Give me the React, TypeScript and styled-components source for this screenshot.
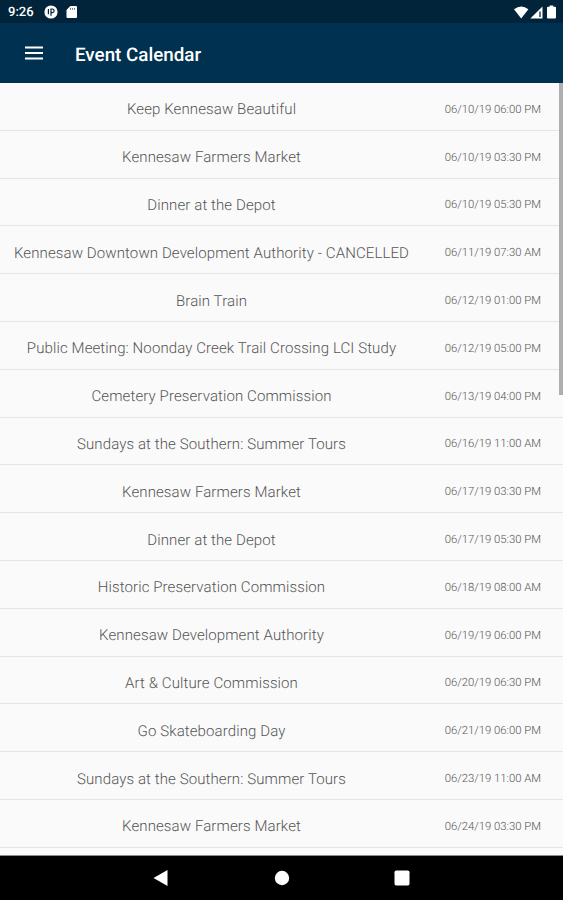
import React from "react";
import styled, { createGlobalStyle } from "styled-components";

const GlobalStyle = createGlobalStyle`
  * { box-sizing: border-box; }
  body { margin: 0; background: #fafafa; overflow: hidden; }
`;

const Screen = styled.div`
  width: 563px;
  height: 900px;
  display: flex;
  flex-direction: column;
  overflow: hidden;
  background: #fafafa;
  font-family: Roboto, "Liberation Sans", sans-serif;
  text-rendering: geometricPrecision;
`;

const StatusBar = styled.header`
  flex: none;
  height: 23px;
  padding: 1px 5px 0 8px;
  display: flex;
  align-items: center;
  justify-content: space-between;
  background: #01243a;
  color: #fff;
`;

const StatusGroup = styled.div<{ $gap: number }>`
  display: flex;
  align-items: center;
  gap: ${(p) => p.$gap}px;
`;

const Clock = styled.span`
  width: 28px;
  padding-top: 2px;
  font-size: 13px;
  font-weight: 500;
  line-height: 16px;
  white-space: nowrap;
`;

const AppBar = styled.div`
  flex: none;
  height: 60px;
  padding: 3px 25px 0;
  display: flex;
  align-items: center;
  gap: 32px;
  background: #013150;
  color: #fff;
`;

const MenuButton = styled.button`
  width: 18px;
  height: 14px;
  margin: 0 0 3px;
  padding: 0;
  border: 0;
  background: none;
  display: flex;
`;

const Title = styled.h1`
  margin: 0;
  font-size: 18.8px;
  font-weight: 500;
  line-height: 24px;
  white-space: nowrap;
`;

const ListArea = styled.main`
  position: relative;
  flex: none;
  height: 773px;
  overflow: hidden;
  border-bottom: 1px solid #8a8a8a;
`;

const List = styled.ul`
  margin: 0;
  padding: 0;
  list-style: none;
`;

const Row = styled.li`
  height: 47.8px;
  padding: 6px 22px 0 10px;
  display: flex;
  align-items: center;
  border-bottom: 1.5px solid #e5e5e5;
`;

const EventName = styled.span`
  width: 403px;
  text-align: center;
  font-size: 15px;
  font-weight: 300;
  letter-spacing: 0.11px;
  line-height: 20px;
  color: #555;
  white-space: nowrap;
`;

const EventDate = styled.time`
  margin-left: auto;
  padding-top: 1px;
  font-size: 11.3px;
  font-weight: 300;
  line-height: 16px;
  color: #555;
  white-space: nowrap;
`;

const ScrollThumb = styled.div`
  position: absolute;
  top: 0;
  right: 0;
  width: 4px;
  height: 312px;
  background: #aeaeae;
`;

const NavBar = styled.nav`
  flex: none;
  height: 44px;
  padding: 0 152px;
  display: flex;
  align-items: center;
  justify-content: space-between;
  background: #000;
`;

const NavButton = styled.button`
  width: 18px;
  height: 18px;
  padding: 0;
  border: 0;
  background: none;
  display: flex;
`;

const events: [string, string][] = [
  ["Keep Kennesaw Beautiful", "06/10/19 06:00 PM"],
  ["Kennesaw Farmers Market", "06/10/19 03:30 PM"],
  ["Dinner at the Depot", "06/10/19 05:30 PM"],
  ["Kennesaw Downtown Development Authority - CANCELLED", "06/11/19 07:30 AM"],
  ["Brain Train", "06/12/19 01:00 PM"],
  ["Public Meeting: Noonday Creek Trail Crossing LCI Study", "06/12/19 05:00 PM"],
  ["Cemetery Preservation Commission", "06/13/19 04:00 PM"],
  ["Sundays at the Southern: Summer Tours", "06/16/19 11:00 AM"],
  ["Kennesaw Farmers Market", "06/17/19 03:30 PM"],
  ["Dinner at the Depot", "06/17/19 05:30 PM"],
  ["Historic Preservation Commission", "06/18/19 08:00 AM"],
  ["Kennesaw Development Authority", "06/19/19 06:00 PM"],
  ["Art & Culture Commission", "06/20/19 06:30 PM"],
  ["Go Skateboarding Day", "06/21/19 06:00 PM"],
  ["Sundays at the Southern: Summer Tours", "06/23/19 11:00 AM"],
  ["Kennesaw Farmers Market", "06/24/19 03:30 PM"],
];

export default function App() {
  return (
    <Screen>
      <GlobalStyle />
      <StatusBar>
        <StatusGroup $gap={8}>
          <Clock>9:26</Clock>
          <svg width="14" height="14" viewBox="0 0 14 14">
            <circle cx="7" cy="7" r="6.600" fill="#fff" />
            <path d="M4.400 4v5.200M7 10.800V4H8.300a1.800 1.800 0 0 1 0 3.600H7" fill="none" stroke="#01243a" strokeWidth="1.200" />
          </svg>
          <svg width="12" height="14" viewBox="0 0 12 14">
            <path d="M4.300 1H10a1 1 0 0 1 1 1v10a1 1 0 0 1-1 1H1.500a1 1 0 0 1-1-1V5z" fill="#fff" />
            <path d="M4.500 3v1.800M6.500 3v1.800M8.500 3v1.800" stroke="#01243a" strokeWidth=".6" />
          </svg>
        </StatusGroup>
        <StatusGroup $gap={1}>
          <svg width="15" height="13" viewBox="0 0 15 13">
            <path d="M0 3.300Q7.200-2.300 14.400 3.300L7.200 12.500z" fill="#fff" />
          </svg>
          <svg width="14" height="13" viewBox="0 0 14 13">
            <path d="M12.500 .5V12.500H.3z" fill="#fff" />
            <path d="M10 5.500v5.500" stroke="#01243a" strokeWidth="1.300" fill="none" />
          </svg>
          <svg width="13" height="14" viewBox="0 0 13 14">
            <path d="M4.700 .5h3.600V1.700H10a1 1 0 0 1 1 1v9.900a1 1 0 0 1-1 1H3a1 1 0 0 1-1-1V2.700a1 1 0 0 1 1-1h1.700z" fill="#fff" />
          </svg>
        </StatusGroup>
      </StatusBar>
      <AppBar>
        <MenuButton aria-label="Menu">
          <svg width="18" height="14" viewBox="0 0 18 14">
            <path d="M0 1.500h18M0 7h18M0 12.500h18" stroke="#fff" strokeWidth="1.900" />
          </svg>
        </MenuButton>
        <Title>Event Calendar</Title>
      </AppBar>
      <ListArea>
        <List>
          {events.map(([name, date]) => (
            <Row key={date}>
              <EventName>{name}</EventName>
              <EventDate>{date}</EventDate>
            </Row>
          ))}
        </List>
        <ScrollThumb />
      </ListArea>
      <NavBar>
        <NavButton aria-label="Back">
          <svg width="18" height="18" viewBox="0 0 18 18">
            <path d="M15.500 1v16L1.500 9z" fill="#fff" />
          </svg>
        </NavButton>
        <NavButton aria-label="Home">
          <svg width="18" height="18" viewBox="0 0 18 18">
            <circle cx="9" cy="9" r="7.200" fill="#fff" />
          </svg>
        </NavButton>
        <NavButton aria-label="Recent apps">
          <svg width="18" height="18" viewBox="0 0 18 18">
            <rect x="1.500" y="1.500" width="15" height="15" rx="1.700" fill="#fff" />
          </svg>
        </NavButton>
      </NavBar>
    </Screen>
  );
}
